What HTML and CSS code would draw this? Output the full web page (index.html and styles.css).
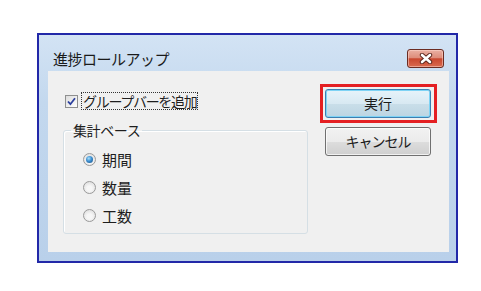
FILE: index.html
```html
<!DOCTYPE html>
<html>
	<head>
		<meta charset="utf-8">
		<title>進捗ロールアップ</title>
		<link rel="stylesheet" href="styles.css">
	</head>
	<body>
		<div class="window">
			<div class="titlebar">
				<span class="title">進捗ロールアップ</span>
				<span class="close-btn">
					<svg width="14" height="11" viewBox="0 0 14 11">
						<path d="M3 2 L11 9 M11 2 L3 9" stroke="#5a241b" stroke-width="4.4" stroke-linecap="round"/>
						<path d="M3 2 L11 9 M11 2 L3 9" stroke="#ffffff" stroke-width="2.6" stroke-linecap="round"/>
					</svg>
				</span>
			</div>
			<div class="client">
				<div class="options">
					<div class="check-row">
						<span class="checkbox">
							<svg width="11" height="11" viewBox="0 0 11 11">
								<path d="M2 5.5 L4.4 8.2 L9 2.2" fill="none" stroke="#2b3f9e" stroke-width="1.8"/>
							</svg>
						</span>
						<span class="focus-text">グループバーを追加</span>
					</div>
					<fieldset class="group">
						<legend>集計ベース</legend>
						<div class="radio-row"><span class="radio checked"></span><span>期間</span></div>
						<div class="radio-row"><span class="radio"></span><span>数量</span></div>
						<div class="radio-row"><span class="radio"></span><span>工数</span></div>
					</fieldset>
				</div>
				<div class="actions">
					<div class="highlight">
						<div class="btn btn-default">実行</div>
					</div>
					<div class="btn btn-cancel">キャンセル</div>
				</div>
			</div>
		</div>
	</body>
</html>
```

FILE: styles.css
```css
html, body {
	width: 481px;
	height: 291px;
}
body {
	margin: 0;
	background: #ffffff;
	overflow: hidden;
	font-family: "Noto Sans CJK JP", "Noto Sans", sans-serif;
	color: #1e1e1e;
}
.window {
	box-sizing: border-box;
	margin: 33px 0 0 37px;
	width: 421px;
	height: 230px;
	border: 2px solid #2228a8;
	background: linear-gradient(#d3e3f4, #c3d8ee 30%, #b9d0ea);
	display: flex;
	flex-direction: column;
}
.titlebar {
	box-sizing: border-box;
	height: 36px;
	padding: 11px 12px 0 14px;
	display: flex;
	align-items: center;
}
.title {
	font-size: 15px;
	letter-spacing: -0.5px;
	line-height: 18px;
	color: #1a1a1a;
}
.close-btn {
	margin-left: auto;
	box-sizing: border-box;
	width: 37px;
	height: 19px;
	border: 1px solid #6b2c22;
	border-radius: 3px;
	background: linear-gradient(#eab0a3 0%, #de8d7b 45%, #c9472f 52%, #d96a4f 100%);
	box-shadow: inset 0 0 0 1px rgba(255, 220, 210, 0.5);
	display: flex;
	align-items: center;
	justify-content: center;
}
.client {
	flex: 1;
	margin: 0 7px 9px 9px;
	background: #f0f0f0;
	display: flex;
}
.options {
	padding: 22px 0 0 15px;
}
.check-row {
	display: flex;
	align-items: center;
	height: 16px;
	margin-left: 2px;
}
.checkbox {
	box-sizing: border-box;
	width: 13px;
	height: 13px;
	border: 1px solid #8e8f8f;
	background: linear-gradient(135deg, #dcdcdc, #ffffff);
	display: flex;
	align-items: center;
	justify-content: center;
}
.focus-text {
	margin-left: 3px;
	padding: 0 1px;
	border: 1px dotted #333333;
	font-size: 14px;
	letter-spacing: -1.3px;
	line-height: 16px;
}
.group {
	margin: 13px 0 0 0;
	width: 245px;
	box-sizing: border-box;
	border: 1px solid #d5dfe5;
	border-radius: 3px;
	padding: 7px 0 4px 19px;
	box-shadow: inset 1px 1px 0 #ffffff;
}
.group legend {
	margin-left: -12px;
	padding: 0 2px;
	font-size: 14px;
	letter-spacing: -0.4px;
	line-height: 16px;
}
.radio-row {
	display: flex;
	align-items: center;
	height: 28px;
	font-size: 15px;
}
.radio {
	position: relative;
	box-sizing: border-box;
	width: 13px;
	height: 13px;
	border: 1px solid #9a9a9a;
	border-radius: 50%;
	background: radial-gradient(circle at 50% 60%, #f6f6f6 30%, #d6d6d6 100%);
	margin-right: 6px;
}
.radio.checked::after {
	content: "";
	position: absolute;
	left: 2px;
	top: 2px;
	width: 7px;
	height: 7px;
	border-radius: 50%;
	background: radial-gradient(circle at 40% 35%, #a9e0fb 0%, #3d8fd0 45%, #14497f 100%);
}
.actions {
	margin-left: auto;
	margin-right: 12px;
	padding-top: 13px;
	width: 117px;
	display: flex;
	flex-direction: column;
}
.highlight {
	box-sizing: border-box;
	width: 117px;
	height: 39px;
	border: 3px solid #e41f22;
	padding: 2px 3px 2px 2px;
}
.btn {
	box-sizing: border-box;
	width: 106px;
	height: 29px;
	border: 1px solid #707070;
	border-radius: 3px;
	background: linear-gradient(#f2f2f2 0%, #ebebeb 50%, #dddddd 51%, #cfcfcf 100%);
	box-shadow: inset 0 0 0 1px rgba(255, 255, 255, 0.7);
	font-size: 14px;
	line-height: 27px;
	text-align: center;
	color: #1a1a1a;
}
.btn-default {
	border-color: #3c7fb1;
	background: linear-gradient(#e6f3fa 0%, #d8e9f2 50%, #c9dee9 51%, #bcd5e2 100%);
	box-shadow: inset 0 0 0 1px #7ed3f5;
}
.btn-cancel {
	margin: 4px 0 0 5px;
	letter-spacing: -1px;
}
```
